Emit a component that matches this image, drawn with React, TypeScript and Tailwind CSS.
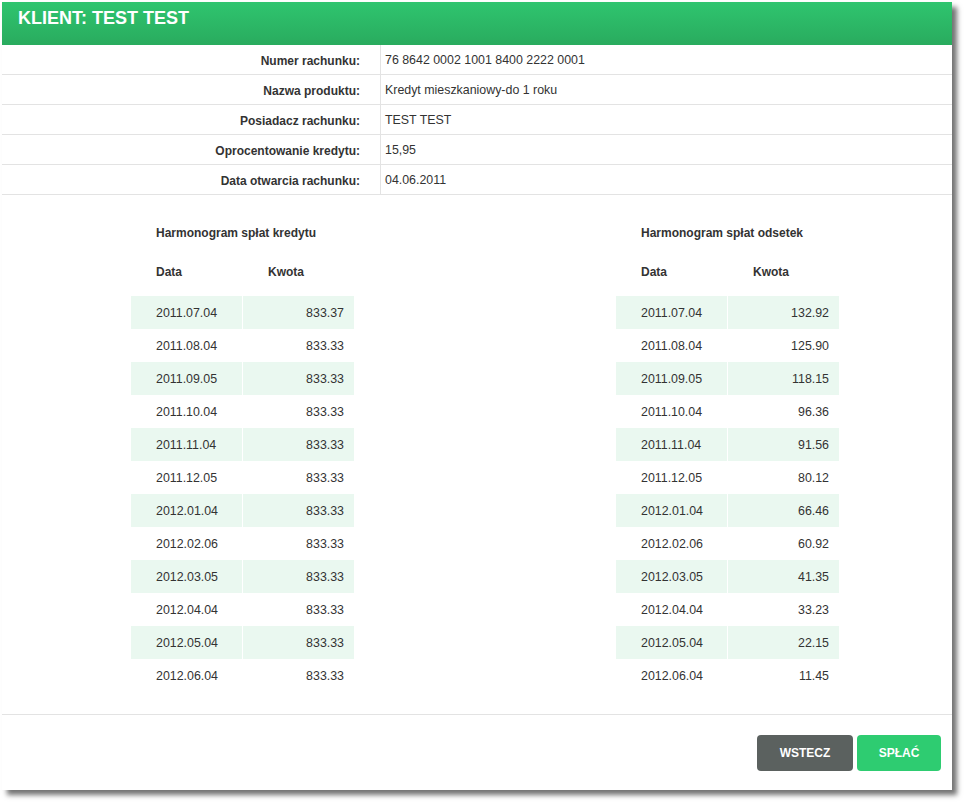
const info = [
  ['Numer rachunku:', '76 8642 0002 1001 8400 2222 0001'],
  ['Nazwa produktu:', 'Kredyt mieszkaniowy-do 1 roku'],
  ['Posiadacz rachunku:', 'TEST TEST'],
  ['Oprocentowanie kredytu:', '15,95'],
  ['Data otwarcia rachunku:', '04.06.2011'],
];

const dates = [
  '2011.07.04',
  '2011.08.04',
  '2011.09.05',
  '2011.10.04',
  '2011.11.04',
  '2011.12.05',
  '2012.01.04',
  '2012.02.06',
  '2012.03.05',
  '2012.04.04',
  '2012.05.04',
  '2012.06.04',
];

const principal = [
  '833.37', '833.33', '833.33', '833.33', '833.33', '833.33',
  '833.33', '833.33', '833.33', '833.33', '833.33', '833.33',
];

const interest = [
  '132.92', '125.90', '118.15', '96.36', '91.56', '80.12',
  '66.46', '60.92', '41.35', '33.23', '22.15', '11.45',
];

function Schedule({ title, amounts }: { title: string; amounts: string[] }) {
  return (
    <div className="w-[223px]">
      <div className="h-[20px] pl-[25px] font-bold leading-[20px]">{title}</div>
      <div className="mt-[19px] flex h-[20px] font-bold leading-[20px]">
        <div className="w-[112px] pl-[25px]">Data</div>
        <div className="pl-[25px]">Kwota</div>
      </div>
      <div className="mt-[14px] text-[12.4px]">
        {dates.map((date, i) => (
          <div
            key={date}
            className={`flex h-[33px] items-stretch ${i % 2 === 0 ? 'bg-[#eaf8f0]' : ''}`}
          >
            <div className="flex w-[111px] items-center pl-[25px] pt-[2px]">{date}</div>
            <div className="w-px bg-white" />
            <div className="flex w-[111px] items-center justify-end pr-[10px] pt-[2px]">
              {amounts[i]}
            </div>
          </div>
        ))}
      </div>
    </div>
  );
}

export default function App() {
  return (
    <div className="h-[804px] w-[966px] bg-white pl-[2px] pt-[2px] font-['Liberation_Sans',Arial,sans-serif] text-[12px] text-[#333333]">
      <div className="flex h-[788px] w-[950px] flex-col bg-white shadow-[5px_5px_5px_rgba(0,0,0,0.55)]">
        <div className="h-[43px] bg-gradient-to-b from-[#2fc56f] to-[#29ab5e] pl-[16px] pt-[5px] text-[18px] font-bold leading-[22px] text-white">
          KLIENT: TEST TEST
        </div>

        <div>
          {info.map(([label, value]) => (
            <div key={label} className="flex h-[30px] border-b border-[#e3e3e3]">
              <div className="flex w-[379px] items-center justify-end border-r border-[#e3e3e3] pr-[20px] pt-[2px] font-bold">
                {label}
              </div>
              <div className="flex items-center pl-[4px] pt-[2px] text-[12.4px]">{value}</div>
            </div>
          ))}
        </div>

        <div className="flex border-b border-[#e3e3e3] pb-[22px] pl-[129px] pt-[28px]">
          <Schedule title="Harmonogram spłat kredytu" amounts={principal} />
          <div className="w-[262px]" />
          <Schedule title="Harmonogram spłat odsetek" amounts={interest} />
        </div>

        <div className="flex justify-end gap-[4px] pr-[11px] pt-[20px]">
          <button className="h-[36px] w-[96px] rounded-[4px] bg-[#5b615f] font-bold text-white">
            WSTECZ
          </button>
          <button className="h-[36px] w-[84px] rounded-[4px] bg-[#2ecc71] font-bold text-white">
            SPŁAĆ
          </button>
        </div>
      </div>
    </div>
  );
}
